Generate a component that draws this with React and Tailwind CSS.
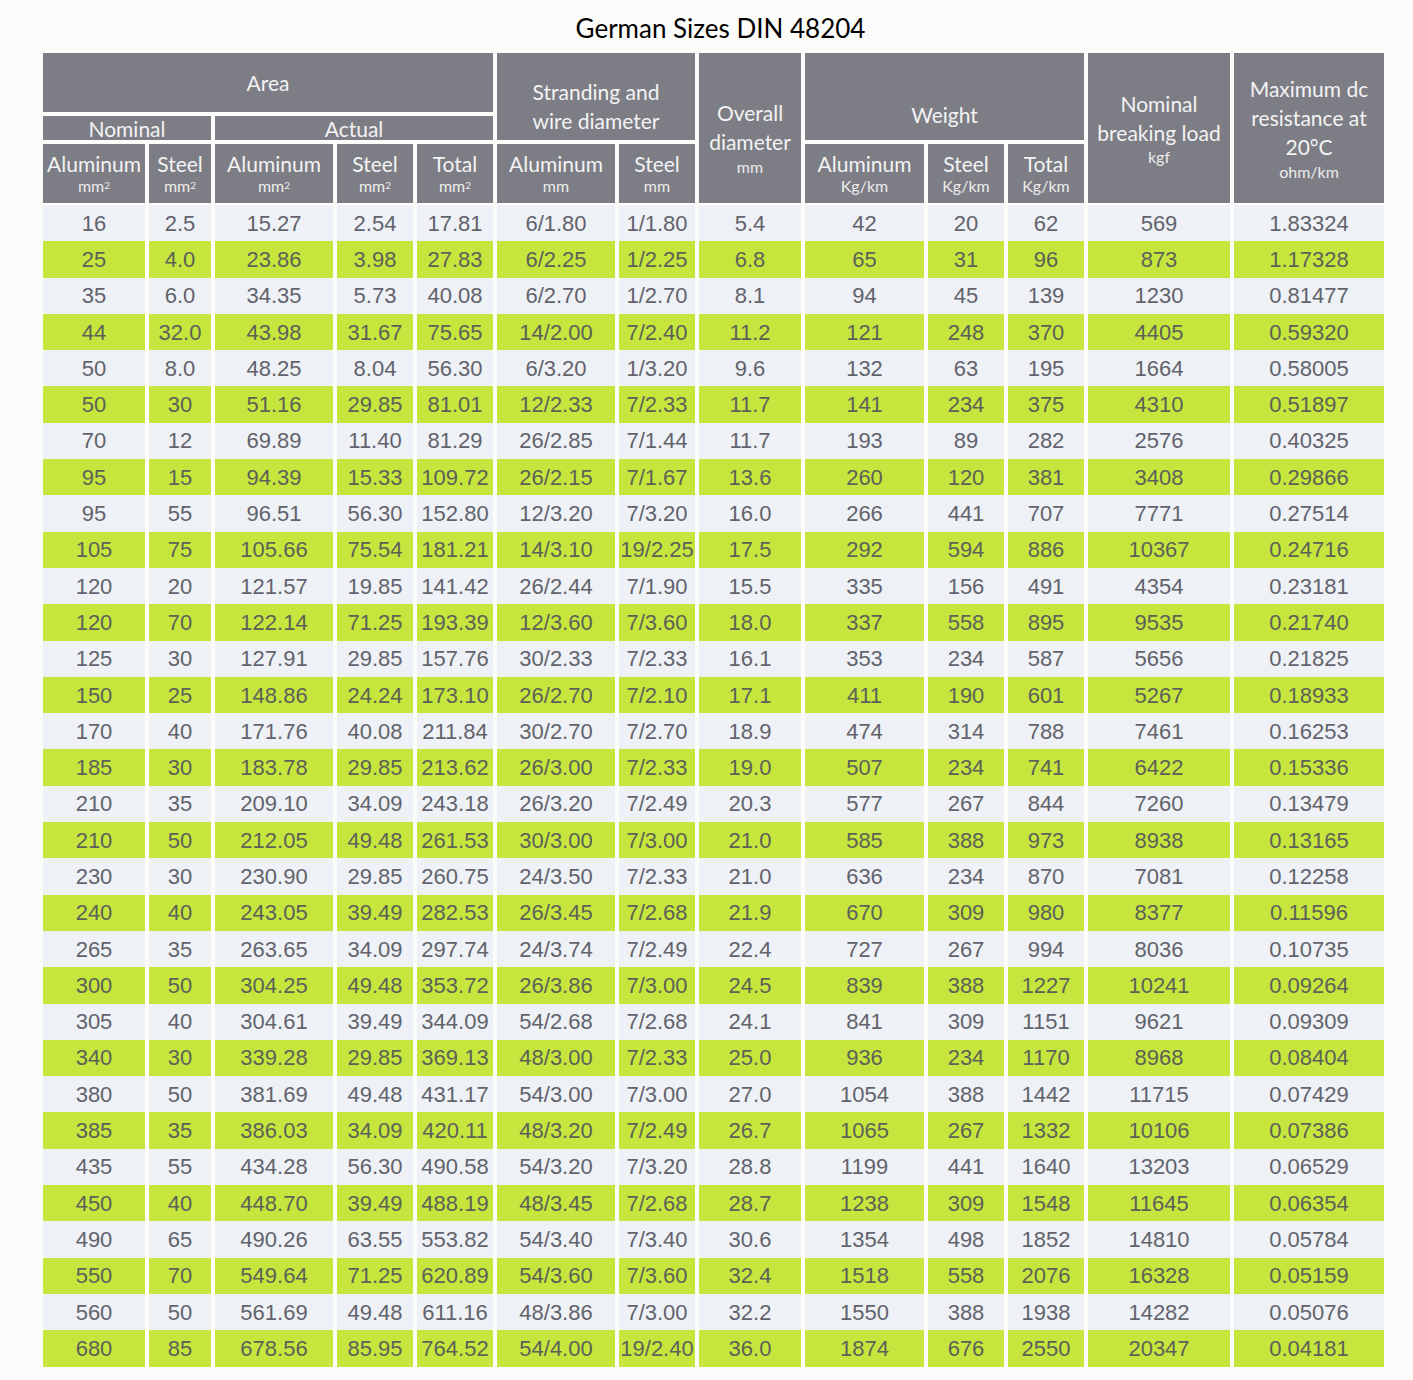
import React from "react";

const rows = [
  ["16","2.5","15.27","2.54","17.81","6/1.80","1/1.80","5.4","42","20","62","569","1.83324"],
  ["25","4.0","23.86","3.98","27.83","6/2.25","1/2.25","6.8","65","31","96","873","1.17328"],
  ["35","6.0","34.35","5.73","40.08","6/2.70","1/2.70","8.1","94","45","139","1230","0.81477"],
  ["44","32.0","43.98","31.67","75.65","14/2.00","7/2.40","11.2","121","248","370","4405","0.59320"],
  ["50","8.0","48.25","8.04","56.30","6/3.20","1/3.20","9.6","132","63","195","1664","0.58005"],
  ["50","30","51.16","29.85","81.01","12/2.33","7/2.33","11.7","141","234","375","4310","0.51897"],
  ["70","12","69.89","11.40","81.29","26/2.85","7/1.44","11.7","193","89","282","2576","0.40325"],
  ["95","15","94.39","15.33","109.72","26/2.15","7/1.67","13.6","260","120","381","3408","0.29866"],
  ["95","55","96.51","56.30","152.80","12/3.20","7/3.20","16.0","266","441","707","7771","0.27514"],
  ["105","75","105.66","75.54","181.21","14/3.10","19/2.25","17.5","292","594","886","10367","0.24716"],
  ["120","20","121.57","19.85","141.42","26/2.44","7/1.90","15.5","335","156","491","4354","0.23181"],
  ["120","70","122.14","71.25","193.39","12/3.60","7/3.60","18.0","337","558","895","9535","0.21740"],
  ["125","30","127.91","29.85","157.76","30/2.33","7/2.33","16.1","353","234","587","5656","0.21825"],
  ["150","25","148.86","24.24","173.10","26/2.70","7/2.10","17.1","411","190","601","5267","0.18933"],
  ["170","40","171.76","40.08","211.84","30/2.70","7/2.70","18.9","474","314","788","7461","0.16253"],
  ["185","30","183.78","29.85","213.62","26/3.00","7/2.33","19.0","507","234","741","6422","0.15336"],
  ["210","35","209.10","34.09","243.18","26/3.20","7/2.49","20.3","577","267","844","7260","0.13479"],
  ["210","50","212.05","49.48","261.53","30/3.00","7/3.00","21.0","585","388","973","8938","0.13165"],
  ["230","30","230.90","29.85","260.75","24/3.50","7/2.33","21.0","636","234","870","7081","0.12258"],
  ["240","40","243.05","39.49","282.53","26/3.45","7/2.68","21.9","670","309","980","8377","0.11596"],
  ["265","35","263.65","34.09","297.74","24/3.74","7/2.49","22.4","727","267","994","8036","0.10735"],
  ["300","50","304.25","49.48","353.72","26/3.86","7/3.00","24.5","839","388","1227","10241","0.09264"],
  ["305","40","304.61","39.49","344.09","54/2.68","7/2.68","24.1","841","309","1151","9621","0.09309"],
  ["340","30","339.28","29.85","369.13","48/3.00","7/2.33","25.0","936","234","1170","8968","0.08404"],
  ["380","50","381.69","49.48","431.17","54/3.00","7/3.00","27.0","1054","388","1442","11715","0.07429"],
  ["385","35","386.03","34.09","420.11","48/3.20","7/2.49","26.7","1065","267","1332","10106","0.07386"],
  ["435","55","434.28","56.30","490.58","54/3.20","7/3.20","28.8","1199","441","1640","13203","0.06529"],
  ["450","40","448.70","39.49","488.19","48/3.45","7/2.68","28.7","1238","309","1548","11645","0.06354"],
  ["490","65","490.26","63.55","553.82","54/3.40","7/3.40","30.6","1354","498","1852","14810","0.05784"],
  ["550","70","549.64","71.25","620.89","54/3.60","7/3.60","32.4","1518","558","2076","16328","0.05159"],
  ["560","50","561.69","49.48","611.16","48/3.86","7/3.00","32.2","1550","388","1938","14282","0.05076"],
  ["680","85","678.56","85.95","764.52","54/4.00","19/2.40","36.0","1874","676","2550","20347","0.04181"],
];

const cols =
  "grid-cols-[102px_62px_118px_76px_76px_118px_76px_102px_119px_76px_76px_142px_150px]";

const H = "bg-[#7d7d85] text-[#f3f3f3] flex flex-col items-center justify-center text-center";

function Sub({ label, unit, sup }) {
  return (
    <div className={H + " leading-none"}>
      <span className="text-[21px] leading-[24px] whitespace-nowrap">{label}</span>
      <span className="text-[16px] leading-[20px] text-[#ececec]">
        {unit}
        {sup && <sup className="text-[10px] relative -top-[3px]">2</sup>}
      </span>
    </div>
  );
}

export default function App() {
  return (
    <div
      className="min-h-[1380px] w-[1413px] bg-[#fcfcfa] pl-[43px] pt-[11px]"
      style={{ fontFamily: "Lato, 'Open Sans', sans-serif" }}
    >
      <div className="w-[1341px] text-center text-[26px] leading-[34px] text-black pl-[14px]">
        German Sizes DIN 48204
      </div>

      <div className={`grid ${cols} grid-rows-[59px_24px_59px] gap-[4px] mt-[8px]`}>
        <div className={H + " col-span-5 text-[21px]"}>Area</div>
        <div className={H + " col-span-2 row-span-2 text-[21px] leading-[29px] pt-[18px]"}>
          <span>Stranding and</span>
          <span>wire diameter</span>
        </div>
        <div className={H + " row-span-3 pt-[20px]"}>
          <span className="text-[21px] leading-[29px]">Overall</span>
          <span className="text-[21px] leading-[29px]">diameter</span>
          <span className="text-[16px] leading-[22px] text-[#ececec]">mm</span>
        </div>
        <div className={H + " col-span-3 row-span-2 text-[21px] pt-[36px]"}>Weight</div>
        <div className={H + " row-span-3"}>
          <span className="text-[21px] leading-[29px]">Nominal</span>
          <span className="text-[21px] leading-[29px] whitespace-nowrap">breaking load</span>
          <span className="text-[16px] leading-[20px] text-[#ececec]">kgf</span>
        </div>
        <div className={H + " row-span-3"}>
          <span className="text-[21px] leading-[29px] whitespace-nowrap">Maximum dc</span>
          <span className="text-[21px] leading-[29px] whitespace-nowrap">resistance at</span>
          <span className="text-[21px] leading-[29px]">20°C</span>
          <span className="text-[16px] leading-[22px] text-[#ececec]">ohm/km</span>
        </div>
        <div className={H + " col-span-2 text-[21px] leading-[22px] pt-[2px]"}>Nominal</div>
        <div className={H + " col-span-3 text-[21px] leading-[22px] pt-[2px]"}>Actual</div>
        <Sub label="Aluminum" unit="mm" sup />
        <Sub label="Steel" unit="mm" sup />
        <Sub label="Aluminum" unit="mm" sup />
        <Sub label="Steel" unit="mm" sup />
        <Sub label="Total" unit="mm" sup />
        <Sub label="Aluminum" unit="mm" />
        <Sub label="Steel" unit="mm" />
        <Sub label="Aluminum" unit="Kg/km" />
        <Sub label="Steel" unit="Kg/km" />
        <Sub label="Total" unit="Kg/km" />
      </div>

      <div
        className="mt-[2px]"
        style={{ fontFamily: "'Liberation Sans', Arial, sans-serif" }}
      >
        {rows.map((r, i) => {
          const green = i % 2 === 1;
          return (
            <div key={i} className={`grid ${cols} gap-x-[4px] h-[36.3px]`}>
              {r.map((v, j) => (
                <div
                  key={j}
                  className={
                    "flex items-center justify-center text-[22px] " +
                    (green
                      ? "bg-[#c6e63e] text-[#5d6158]"
                      : "bg-[#eef1f5] text-[#62636c]")
                  }
                >
                  {v}
                </div>
              ))}
            </div>
          );
        })}
      </div>
    </div>
  );
}
